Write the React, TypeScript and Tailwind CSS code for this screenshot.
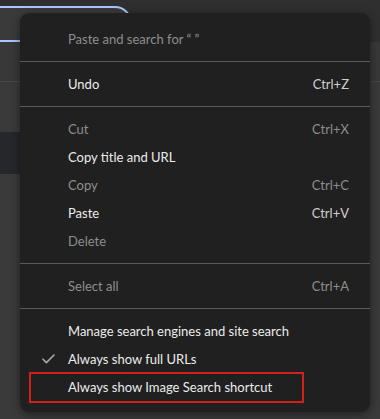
import type { ReactNode } from "react"

type Item = {
  label: string
  shortcut?: string
  disabled?: boolean
  checked?: boolean
}

const groups: Item[][] = [
  [{ label: "Paste and search for \u201c \u201d", disabled: true }],
  [{ label: "Undo", shortcut: "Ctrl+Z" }],
  [
    { label: "Cut", shortcut: "Ctrl+X", disabled: true },
    { label: "Copy title and URL" },
    { label: "Copy", shortcut: "Ctrl+C", disabled: true },
    { label: "Paste", shortcut: "Ctrl+V" },
    { label: "Delete", disabled: true },
  ],
  [{ label: "Select all", shortcut: "Ctrl+A", disabled: true }],
  [
    { label: "Manage search engines and site search" },
    { label: "Always show full URLs", checked: true },
    { label: "Always show Image Search shortcut" },
  ],
]

function Check() {
  return (
    <svg width="13" height="10" viewBox="0 0 13 10" fill="none">
      <path d="M1 5.2 4.4 8.6 12 1" stroke="#a9a9a9" strokeWidth="1.6" strokeLinecap="round" strokeLinejoin="round" />
    </svg>
  )
}

function MenuRow({ item }: { item: Item }) {
  return (
    <div className="relative flex h-[28px] items-center pl-[48px] pr-[21px] pt-[2px]">
      {item.checked && (
        <span className="absolute left-[22px] top-[9px]">
          <Check />
        </span>
      )}
      <span className={item.disabled ? "flex-1 text-[#8e8e8e]" : "flex-1 text-[#ececec]"}>{item.label}</span>
      {item.shortcut && (
        <span className={item.disabled ? "text-[#8e8e8e]" : "text-[#cfcfcf]"}>{item.shortcut}</span>
      )}
    </div>
  )
}

function Separator() {
  return (
    <div className="py-2">
      <div className="h-px bg-[#5a5a5a]" />
    </div>
  )
}

function Backdrop({ children }: { children: ReactNode }) {
  return (
    <div className="relative h-[419px] w-[380px] overflow-hidden bg-[#3a3a3a]">
      <div className="bg-[#2f2f2f] pt-[6px]">
        <div className="-ml-[30px] h-[36px] w-[162px] rounded-r-[17px] border-2 border-[#a8c7fa] bg-[#3a3a3a]" />
        <div className="h-[39px] bg-[#383838]" />
      </div>
      <div className="h-px bg-[#474747]" />
      <div className="h-[50px]" />
      <div className="h-[42px] w-[30px] bg-[#26272b]" />
      {children}
    </div>
  )
}

export default function App() {
  return (
    <Backdrop>
      <div
        className="absolute left-[20px] top-[13px] w-[350px] rounded-[9px] bg-[#202020] pb-[11px] pt-3 text-[13px] shadow-[0_2px_10px_rgba(0,0,0,0.45)]"
        style={{ fontFamily: "Lato, 'Noto Sans', sans-serif" }}
      >
        {groups.map((group, gi) => (
          <div key={gi}>
            {gi > 0 && <Separator />}
            {group.map((item) => (
              <MenuRow key={item.label} item={item} />
            ))}
          </div>
        ))}
      </div>
      <div className="absolute left-[29px] top-[372px] h-[31px] w-[275px] border-2 border-[#d2201c]" />
    </Backdrop>
  )
}
